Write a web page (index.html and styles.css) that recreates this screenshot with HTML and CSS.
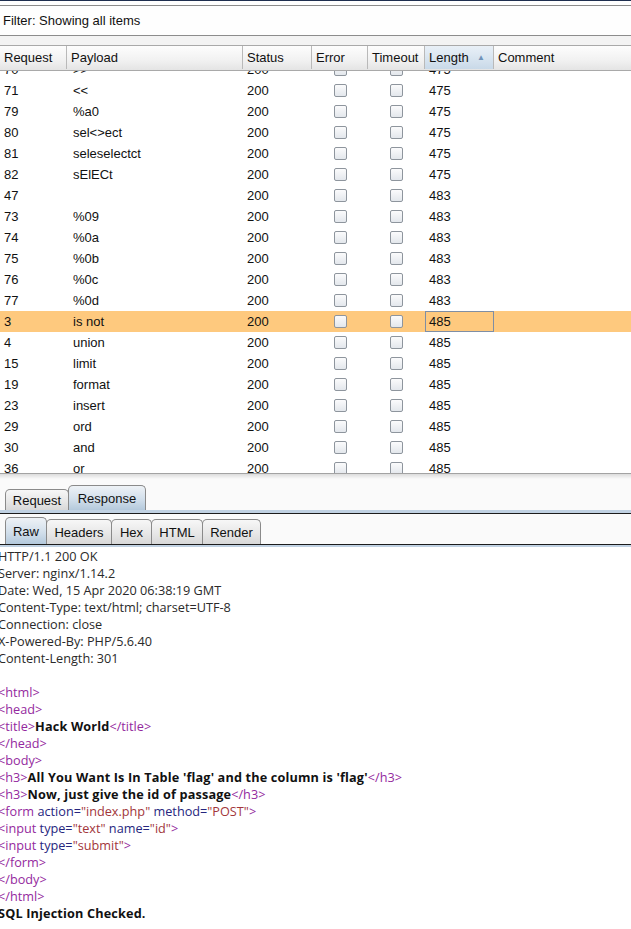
FILE: index.html
```html
<!DOCTYPE html>
<html>
<head>
<meta charset="utf-8">
<link rel="stylesheet" href="styles.css">
</head>
<body>
<div class="app">
  <div class="frame-top"></div>
  <div class="filter-wrap">
    <div class="filter">Filter: Showing all items</div>
  </div>
  <div class="gap"></div>
  <div class="thead row">
    <div class="th">Request</div>
    <div class="th">Payload</div>
    <div class="th">Status</div>
    <div class="th">Error</div>
    <div class="th">Timeout</div>
    <div class="th sorted">Length<span class="arrow">▲</span></div>
    <div class="th last">Comment</div>
  </div>
  <div class="tbody">
    <div class="rows">
      <div class="row tr"><div class="td">70</div><div class="td pl">&gt;&gt;</div><div class="td">200</div><div class="td cb"><span class="check"></span></div><div class="td cb"><span class="check"></span></div><div class="td">475</div><div class="td"></div></div>
      <div class="row tr"><div class="td">71</div><div class="td pl">&lt;&lt;</div><div class="td">200</div><div class="td cb"><span class="check"></span></div><div class="td cb"><span class="check"></span></div><div class="td">475</div><div class="td"></div></div>
      <div class="row tr"><div class="td">79</div><div class="td pl">%a0</div><div class="td">200</div><div class="td cb"><span class="check"></span></div><div class="td cb"><span class="check"></span></div><div class="td">475</div><div class="td"></div></div>
      <div class="row tr"><div class="td">80</div><div class="td pl">sel&lt;&gt;ect</div><div class="td">200</div><div class="td cb"><span class="check"></span></div><div class="td cb"><span class="check"></span></div><div class="td">475</div><div class="td"></div></div>
      <div class="row tr"><div class="td">81</div><div class="td pl">seleselectct</div><div class="td">200</div><div class="td cb"><span class="check"></span></div><div class="td cb"><span class="check"></span></div><div class="td">475</div><div class="td"></div></div>
      <div class="row tr"><div class="td">82</div><div class="td pl">sElECt</div><div class="td">200</div><div class="td cb"><span class="check"></span></div><div class="td cb"><span class="check"></span></div><div class="td">475</div><div class="td"></div></div>
      <div class="row tr"><div class="td">47</div><div class="td pl"></div><div class="td">200</div><div class="td cb"><span class="check"></span></div><div class="td cb"><span class="check"></span></div><div class="td">483</div><div class="td"></div></div>
      <div class="row tr"><div class="td">73</div><div class="td pl">%09</div><div class="td">200</div><div class="td cb"><span class="check"></span></div><div class="td cb"><span class="check"></span></div><div class="td">483</div><div class="td"></div></div>
      <div class="row tr"><div class="td">74</div><div class="td pl">%0a</div><div class="td">200</div><div class="td cb"><span class="check"></span></div><div class="td cb"><span class="check"></span></div><div class="td">483</div><div class="td"></div></div>
      <div class="row tr"><div class="td">75</div><div class="td pl">%0b</div><div class="td">200</div><div class="td cb"><span class="check"></span></div><div class="td cb"><span class="check"></span></div><div class="td">483</div><div class="td"></div></div>
      <div class="row tr"><div class="td">76</div><div class="td pl">%0c</div><div class="td">200</div><div class="td cb"><span class="check"></span></div><div class="td cb"><span class="check"></span></div><div class="td">483</div><div class="td"></div></div>
      <div class="row tr"><div class="td">77</div><div class="td pl">%0d</div><div class="td">200</div><div class="td cb"><span class="check"></span></div><div class="td cb"><span class="check"></span></div><div class="td">483</div><div class="td"></div></div>
      <div class="row tr selected"><div class="td">3</div><div class="td pl">is not</div><div class="td">200</div><div class="td cb"><span class="check"></span></div><div class="td cb"><span class="check"></span></div><div class="td focus">485</div><div class="td"></div></div>
      <div class="row tr"><div class="td">4</div><div class="td pl">union</div><div class="td">200</div><div class="td cb"><span class="check"></span></div><div class="td cb"><span class="check"></span></div><div class="td">485</div><div class="td"></div></div>
      <div class="row tr"><div class="td">15</div><div class="td pl">limit</div><div class="td">200</div><div class="td cb"><span class="check"></span></div><div class="td cb"><span class="check"></span></div><div class="td">485</div><div class="td"></div></div>
      <div class="row tr"><div class="td">19</div><div class="td pl">format</div><div class="td">200</div><div class="td cb"><span class="check"></span></div><div class="td cb"><span class="check"></span></div><div class="td">485</div><div class="td"></div></div>
      <div class="row tr"><div class="td">23</div><div class="td pl">insert</div><div class="td">200</div><div class="td cb"><span class="check"></span></div><div class="td cb"><span class="check"></span></div><div class="td">485</div><div class="td"></div></div>
      <div class="row tr"><div class="td">29</div><div class="td pl">ord</div><div class="td">200</div><div class="td cb"><span class="check"></span></div><div class="td cb"><span class="check"></span></div><div class="td">485</div><div class="td"></div></div>
      <div class="row tr"><div class="td">30</div><div class="td pl">and</div><div class="td">200</div><div class="td cb"><span class="check"></span></div><div class="td cb"><span class="check"></span></div><div class="td">485</div><div class="td"></div></div>
      <div class="row tr"><div class="td">36</div><div class="td pl">or</div><div class="td">200</div><div class="td cb"><span class="check"></span></div><div class="td cb"><span class="check"></span></div><div class="td">485</div><div class="td"></div></div>
    </div>
  </div>
  <div class="split"></div>
  <div class="tabs1">
    <div class="tab small w-req">Request</div>
    <div class="tab sel w-resp">Response</div>
  </div>
  <div class="band1"></div>
  <div class="tabs2">
    <div class="tab sel tall w-raw">Raw</div>
    <div class="tab mid w-hdr">Headers</div>
    <div class="tab mid w-hex">Hex</div>
    <div class="tab mid w-html">HTML</div>
    <div class="tab mid w-render">Render</div>
  </div>
  <div class="band2"></div>
  <div class="raw">
    <div class="ln">HTTP/1.1 200 OK</div>
    <div class="ln">Server: nginx/1.14.2</div>
    <div class="ln">Date: Wed, 15 Apr 2020 06:38:19 GMT</div>
    <div class="ln">Content-Type: text/html; charset=UTF-8</div>
    <div class="ln">Connection: close</div>
    <div class="ln">X-Powered-By: PHP/5.6.40</div>
    <div class="ln">Content-Length: 301</div>
    <div class="ln">&nbsp;</div>
    <div class="ln"><span class="tg">&lt;html&gt;</span></div>
    <div class="ln"><span class="tg">&lt;head&gt;</span></div>
    <div class="ln"><span class="tg">&lt;title&gt;</span><b>Hack World</b><span class="tg">&lt;/title&gt;</span></div>
    <div class="ln"><span class="tg">&lt;/head&gt;</span></div>
    <div class="ln"><span class="tg">&lt;body&gt;</span></div>
    <div class="ln"><span class="tg">&lt;h3&gt;</span><b>All You Want Is In Table 'flag' and the column is 'flag'</b><span class="tg">&lt;/h3&gt;</span></div>
    <div class="ln"><span class="tg">&lt;h3&gt;</span><b>Now, just give the id of passage</b><span class="tg">&lt;/h3&gt;</span></div>
    <div class="ln"><span class="tg">&lt;form</span> <span class="at">action=</span><span class="vl">"index.php"</span> <span class="at">method=</span><span class="vl">"POST"</span><span class="tg">&gt;</span></div>
    <div class="ln"><span class="tg">&lt;input</span> <span class="at">type=</span><span class="vl">"text"</span> <span class="at">name=</span><span class="vl">"id"</span><span class="tg">&gt;</span></div>
    <div class="ln"><span class="tg">&lt;input</span> <span class="at">type=</span><span class="vl">"submit"</span><span class="tg">&gt;</span></div>
    <div class="ln"><span class="tg">&lt;/form&gt;</span></div>
    <div class="ln"><span class="tg">&lt;/body&gt;</span></div>
    <div class="ln"><span class="tg">&lt;/html&gt;</span></div>
    <div class="ln"><b>SQL Injection Checked.</b></div>
  </div>
</div>
</body>
</html>
```
FILE: styles.css
```css
* { box-sizing: border-box; }
html, body { margin: 0; padding: 0; background: #fff; }
body { width: 631px; height: 929px; overflow: hidden; }
.app { font-family: "Liberation Sans", Arial, sans-serif; font-size: 13px; color: #111; }

.frame-top { height: 1px; background: #1f2f50; }
.filter-wrap { padding-top: 4px; background: #fff; }
.filter {
  height: 31px; line-height: 29px; padding-left: 3px;
  border-top: 1px solid #8c8c8c; border-bottom: 1px solid #8c8c8c;
  background: #fefefe; color: #111;
}
.gap { height: 9px; background: #f3f3f3; }

.row { display: grid; grid-template-columns: 67px 176px 69px 56px 57px 69px 1fr; }

.thead {
  height: 26px; padding-bottom: 1px;
  border-top: 1px solid #a9a9a9; border-bottom: 1px solid #a9a9a9;
  background: linear-gradient(#fdfdfd, #f1f1f1 60%, #e4e4e4);
}
.th {
  display: flex; align-items: center; justify-content: space-between;
  padding-left: 4px; padding-right: 8px;
  border-right: 1px solid #b9b9b9; white-space: nowrap;
}
.th.last { border-right: none; }
.th.sorted { background: linear-gradient(#e9f0f7, #d6e3ef 60%, #c9d9e8); }
.arrow { font-size: 8px; color: #6f93b9; }

.tbody { height: 402px; overflow: hidden; background: #fff; }
.rows { margin-top: -12px; }
.tr { height: 21px; }
.td { display: flex; align-items: center; padding-left: 4px; white-space: nowrap; }
.td.pl { padding-left: 6px; }
.td.cb { justify-content: center; padding-left: 0; }
.check {
  width: 13px; height: 13px; border: 1px solid #8e959d; border-radius: 2px;
  background: linear-gradient(#fbfbfc, #e3e7ec);
}
.selected { background: #fec97e; }
.td.focus { border: 1px solid #7f8ea4; padding-left: 3px; }

.split { height: 6px; border-top: 1px solid #a3a3a3; background: linear-gradient(#dcdcdc, #fafafa); }

.tabs1 {
  height: 31px; display: flex; align-items: flex-end; padding-left: 5px;
  background: #fafafa;
}
.tab {
  display: flex; align-items: center; justify-content: center; padding: 0;
  border: 1px solid #8a8a8a; border-bottom: none; border-radius: 5px 5px 0 0;
  background: linear-gradient(#f7f7f7, #e6e6e6 60%, #d8d8d8);
  margin-right: -1px; color: #111;
}
.tab.small { height: 21px; }
.tab.sel { height: 25px; background: linear-gradient(#eef2f6, #d2dfeb 55%, #b4c9dc); }
.tab.tall { height: 27px; }
.tab.mid { height: 25px; }
.w-req { width: 64px; }
.w-resp { width: 78px; }
.w-raw { width: 42px; }
.w-hdr { width: 66px; }
.w-hex { width: 41px; }
.w-html { width: 52px; }
.w-render { width: 59px; }

.band1 { height: 4px; background: #c0d1e2; border-bottom: 1px solid #1c1c1c; }
.tabs2 {
  height: 31px; display: flex; align-items: flex-end; padding-left: 5px;
  background: #fafafa; border-bottom: 1px solid #1c1c1c;
}
.band2 { height: 2px; background: #c0d1e2; }

.raw {
  margin-left: -2px; padding-top: 1px;
  font-family: "Open Sans", "Noto Sans", sans-serif; font-size: 12.7px; color: #2a2a2a;
}
.ln { height: 17px; line-height: 17px; white-space: pre; }
.raw b { color: #111; font-weight: 700; letter-spacing: 0.15px; }
.tg { color: #94299e; }
.at { color: #26267e; }
.vl { color: #a2363b; }
```
